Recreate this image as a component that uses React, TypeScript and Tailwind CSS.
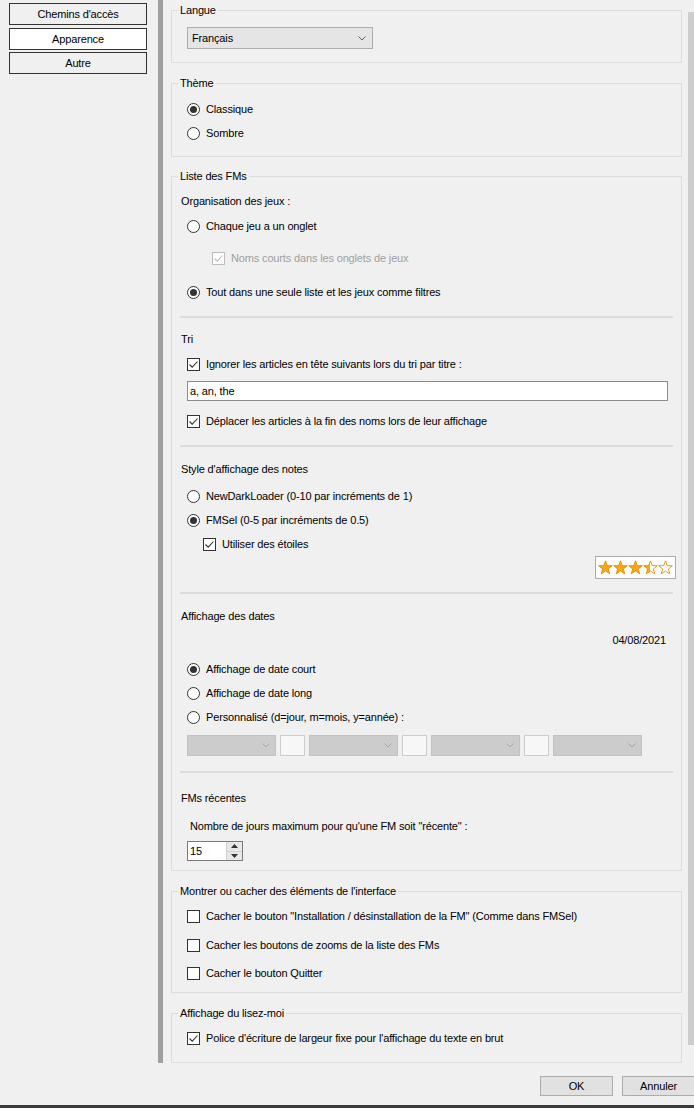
import React from 'react'

// petites briques façon WinForms
function Radio({ label, checked }: { label: string; checked?: boolean }) {
  return (
    <div className="flex items-center h-[24px] ml-[7px]">
      <span className="w-[13px] h-[13px] rounded-full border border-[#333333] bg-white flex items-center justify-center">
        {checked && <span className="w-[7px] h-[7px] rounded-full bg-[#333333]" />}
      </span>
      <span className="ml-[6px]">{label}</span>
    </div>
  )
}

function Check({ label, checked, disabled, className }: { label: string; checked?: boolean; disabled?: boolean; className?: string }) {
  const c = disabled ? '#bcbcbc' : '#333333'
  return (
    <div className={'flex items-center h-[24px] ' + (className ?? 'ml-[7px]')}>
      <span className={'w-[13px] h-[13px] border bg-white flex items-center justify-center ' + (disabled ? 'border-[#bcbcbc]' : 'border-[#333333]')}>
        {checked && (
          <svg width="11" height="11" viewBox="0 0 11 11">
            <path d="M1.5 5.5 L4.2 8.2 L9.5 2.5" fill="none" stroke={c} strokeWidth="1.1" />
          </svg>
        )}
      </span>
      <span className={'ml-[6px] ' + (disabled ? 'text-[#a0a0a0]' : '')}>{label}</span>
    </div>
  )
}

function Chevron({ color }: { color: string }) {
  return (
    <svg width="8" height="5" viewBox="0 0 8 5">
      <path d="M0.5 0.5 L4 4 L7.5 0.5" fill="none" stroke={color} strokeWidth="1" />
    </svg>
  )
}

function Group({ title, className, children }: { title: string; className: string; children: React.ReactNode }) {
  return (
    <fieldset className={'border border-[#dcdcdc] px-[8px] ' + className}>
      <legend className="px-[2px] -ml-[2px] leading-[14px]">{title}</legend>
      {children}
    </fieldset>
  )
}

function Separator({ className }: { className: string }) {
  return <div className={'h-[2px] bg-[#dcdcdc] ' + className} />
}

function starPoints(cx: number, cy: number, r: number, ri: number) {
  const pts: string[] = []
  for (let i = 0; i < 10; i++) {
    const a = -Math.PI / 2 + (i * Math.PI) / 5
    const rr = i % 2 === 0 ? r : ri
    pts.push(`${(cx + rr * Math.cos(a)).toFixed(2)},${(cy + rr * Math.sin(a)).toFixed(2)}`)
  }
  return pts.join(' ')
}

function Stars() {
  const fills = ['#f9a619', '#f9a619', '#f9a619', 'url(#halfStar)', '#ffffff']
  return (
    <svg width="75" height="17" viewBox="0 0 75 17">
      <defs>
        <linearGradient id="halfStar" x1="0" x2="1" y1="0" y2="0">
          <stop offset="50%" stopColor="#f9a619" />
          <stop offset="50%" stopColor="#ffffff" />
        </linearGradient>
      </defs>
      {fills.map((f, i) => (
        <polygon key={i} points={starPoints(7.5 + i * 15, 9, 7.2, 3)} fill={f} stroke="#e39100" strokeWidth="0.9" strokeLinejoin="round" />
      ))}
    </svg>
  )
}

function DisabledCombo() {
  return (
    <div className="w-[89px] h-[21px] bg-[#cccccc] border border-[#c2c2c2] flex items-center justify-end pr-[5px]">
      <Chevron color="#a6a6a6" />
    </div>
  )
}

function SmallBox() {
  return <div className="w-[25px] h-[21px] border border-[#cccccc] bg-[#f7f7f7]" />
}

export default function App() {
  const navItems = [
    { label: "Chemins d'accès", active: false, mt: 'mt-0' },
    { label: 'Apparence', active: true, mt: 'mt-[3px]' },
    { label: 'Autre', active: false, mt: 'mt-[2px]' },
  ]

  return (
    <div className="w-[694px] h-[1108px] bg-[#f0f0f0] text-black text-[11px] leading-[14px] tracking-[-0.15px] font-['Liberation_Sans',Arial,sans-serif] flex flex-col overflow-hidden">
      <div className="flex h-[1063px] shrink-0">
        {/* Navigation */}
        <nav className="w-[158px] pl-[9px] pt-[3px] flex flex-col">
          {navItems.map((item) => (
            <div
              key={item.label}
              className={
                'w-[138px] h-[22px] border border-[#333333] flex items-center justify-center ' +
                item.mt + ' ' +
                (item.active ? 'bg-white' : 'bg-[#f0f0f0]')
              }
            >
              {item.label}
            </div>
          ))}
        </nav>
        <div className="w-[5px] bg-[#a0a0a0]" />

        {/* Réglages */}
        <main className="w-[525px] pl-[8px] pr-[6px] flex flex-col">
          <Group title="Langue" className="mt-[3px] pb-[13px]">
            <div className="mt-[10px] ml-[7px] w-[186px] h-[22px] bg-[#e5e5e5] border border-[#adadad] flex items-center justify-between pl-[4px] pr-[6px]">
              <span>Français</span>
              <Chevron color="#606060" />
            </div>
          </Group>

          <Group title="Thème" className="mt-[13px] pb-[11px]">
            <div className="mt-[7px]">
              <Radio label="Classique" checked />
              <Radio label="Sombre" />
            </div>
          </Group>

          <Group title="Liste des FMs" className="mt-[12px] pb-[9px]">
            <div className="mt-[11px] ml-[1px]">Organisation des jeux :</div>
            <div className="mt-[6px]">
              <Radio label="Chaque jeu a un onglet" />
            </div>
            <div className="mt-[8px]">
              <Check label="Noms courts dans les onglets de jeux" checked disabled className="ml-[32px]" />
            </div>
            <div className="mt-[10px]">
              <Radio label="Tout dans une seule liste et les jeux comme filtres" checked />
            </div>
            <Separator className="mt-[12px]" />

            <div className="mt-[14px] ml-[1px]">Tri</div>
            <div className="mt-[6px]">
              <Check label="Ignorer les articles en tête suivants lors du tri par titre :" checked />
            </div>
            <div className="mt-[5px] ml-[7px] w-[481px] h-[20px] bg-white border border-[#8c8c8c] flex items-center pl-[2px]">
              a, an, the
            </div>
            <div className="mt-[8px]">
              <Check label="Déplacer les articles à la fin des noms lors de leur affichage" checked />
            </div>
            <Separator className="mt-[12px]" />

            <div className="mt-[15px] ml-[1px]">Style d'affichage des notes</div>
            <div className="mt-[8px]">
              <Radio label="NewDarkLoader (0-10 par incréments de 1)" />
              <Radio label="FMSel (0-5 par incréments de 0.5)" checked />
              <Check label="Utiliser des étoiles" checked className="ml-[23px]" />
            </div>
            <div className="flex justify-end -mr-[3px]">
              <div className="w-[81px] h-[23px] border border-[#adadad] bg-white flex items-center justify-center">
                <Stars />
              </div>
            </div>
            <Separator className="mt-[13px]" />

            <div className="mt-[15px] ml-[1px]">Affichage des dates</div>
            <div className="mt-[10px] mr-[7px] text-right">04/08/2021</div>
            <div className="mt-[10px]">
              <Radio label="Affichage de date court" checked />
              <Radio label="Affichage de date long" />
              <Radio label="Personnalisé (d=jour, m=mois, y=année) :" />
            </div>
            <div className="mt-[6px] ml-[7px] flex gap-[4px]">
              <DisabledCombo />
              <SmallBox />
              <DisabledCombo />
              <SmallBox />
              <DisabledCombo />
              <SmallBox />
              <DisabledCombo />
            </div>
            <Separator className="mt-[15px]" />

            <div className="mt-[18px] ml-[1px]">FMs récentes</div>
            <div className="mt-[14px] ml-[10px]">Nombre de jours maximum pour qu'une FM soit "récente" :</div>
            <div className="mt-[8px] ml-[7px] w-[56px] h-[20px] bg-white border border-[#7a7a7a] flex">
              <span className="flex-1 pl-[2px] flex items-center">15</span>
              <div className="w-[16px] flex flex-col border-l border-[#d0d0d0]">
                <div className="flex-1 bg-[#e8e8e8] border-b border-[#d0d0d0] flex items-center justify-center">
                  <svg width="7" height="4" viewBox="0 0 7 4"><polygon points="3.5,0 7,4 0,4" fill="#333333" /></svg>
                </div>
                <div className="flex-1 bg-[#e8e8e8] flex items-center justify-center">
                  <svg width="7" height="4" viewBox="0 0 7 4"><polygon points="0,0 7,0 3.5,4" fill="#333333" /></svg>
                </div>
              </div>
            </div>
          </Group>

          <Group title="Montrer ou cacher des éléments de l'interface" className="mt-[13px] pb-[7px]">
            <div className="mt-[6px]">
              <Check label={'Cacher le bouton "Installation / désinstallation de la FM" (Comme dans FMSel)'} />
            </div>
            <div className="mt-[5px]">
              <Check label="Cacher les boutons de zooms de la liste des FMs" />
            </div>
            <div className="mt-[4px]">
              <Check label="Cacher le bouton Quitter" />
            </div>
          </Group>

          <Group title="Affichage du lisez-moi" className="mt-[13px] pb-[12px]">
            <div className="mt-[6px]">
              <Check label="Police d'écriture de largeur fixe pour l'affichage du texte en brut" checked />
            </div>
          </Group>
        </main>

        {/* barre de défilement */}
        <div className="w-[6px] pt-[12px]">
          <div className="h-[1033px] bg-[#cdcdcd]" />
        </div>
      </div>

      <div className="flex-1 flex items-start gap-[9px] pl-[540px] pt-[13px]">
        <div className="w-[73px] h-[20px] shrink-0 bg-[#e1e1e1] border border-[#adadad] flex items-center justify-center">OK</div>
        <div className="w-[73px] h-[20px] shrink-0 bg-[#e1e1e1] border border-[#adadad] flex items-center justify-center">Annuler</div>
      </div>
      <div className="h-[3px] bg-[#3c3c3c] shrink-0" />
    </div>
  )
}
